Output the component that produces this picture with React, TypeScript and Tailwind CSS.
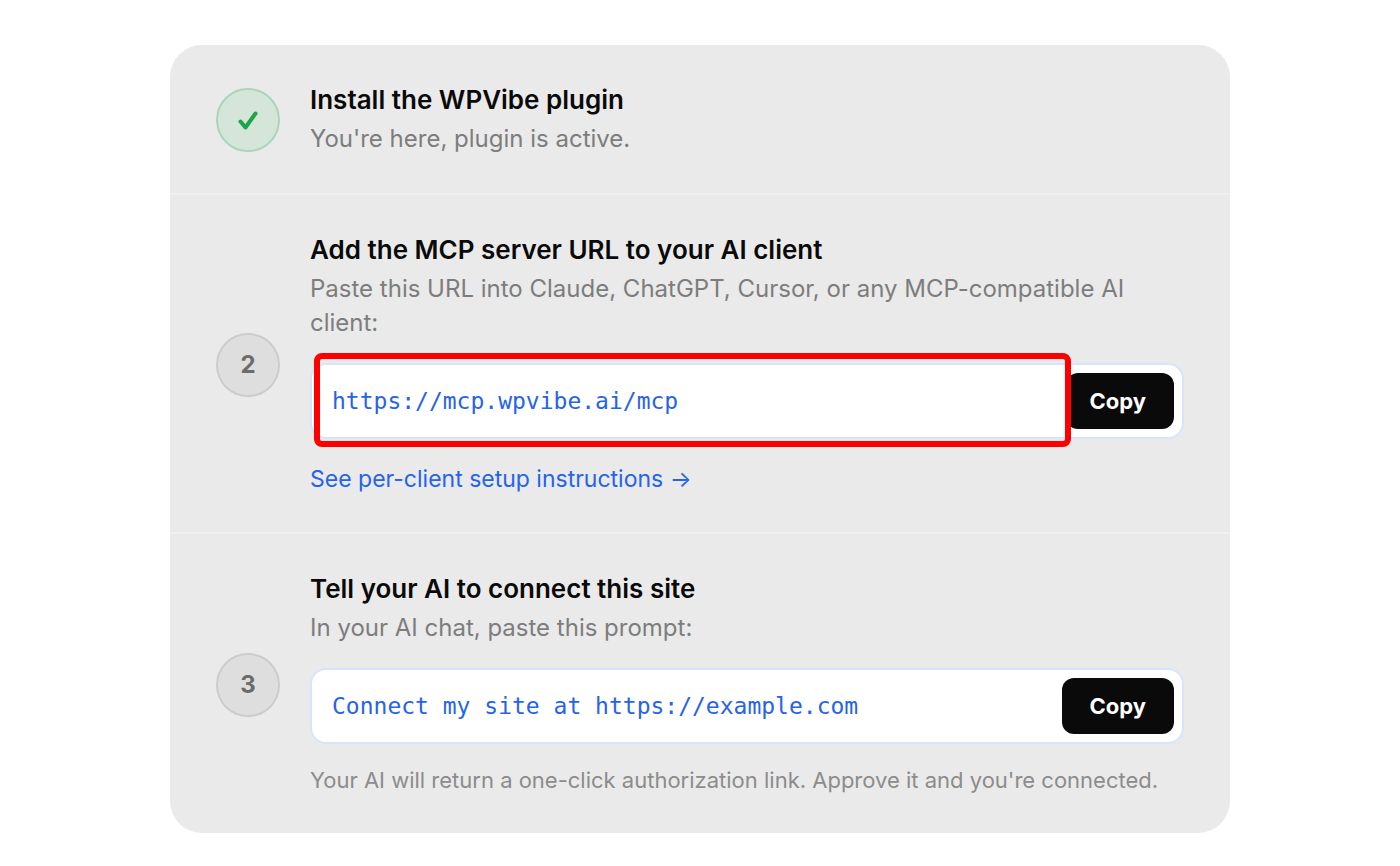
import React from 'react';

interface StepProps {
  badge: React.ReactNode;
  done?: boolean;
  title: string;
  description: string;
  children?: React.ReactNode;
}

const Step: React.FC<StepProps> = ({ badge, done, title, description, children }) => (
  <li className="flex items-center gap-[30px] px-[46px] pt-[39px] pb-[37px] border-b-2 border-[#f0f0f0] last:border-b-0">
    <div
      className={`flex size-16 shrink-0 items-center justify-center rounded-full border-2 text-2xl font-bold ${
        done ? 'border-[#a9d6ba] bg-[#d5e5da] text-[#1ba64c]' : 'border-[#cccccc] bg-[#dedede] text-[#6b6b6b]'
      }`}
    >
      {badge}
    </div>
    <div className="min-w-0 flex-1">
      <h2 className="text-[26px] leading-8 font-semibold text-[#0a0a0a]">{title}</h2>
      <p className="mt-1.5 text-[24px] leading-[34px] text-[#7d7d7d]">{description}</p>
      {children}
    </div>
  </li>
);

interface CopyFieldProps {
  label: string;
  value: string;
  highlighted?: boolean;
}

const CopyField: React.FC<CopyFieldProps> = ({ label, value, highlighted }) => (
  <div className="relative mt-[23px] flex items-center rounded-2xl border-2 border-[#d8e3fd] bg-white p-2">
    <input
      aria-label={label}
      readOnly
      value={value}
      className="min-w-0 flex-1 bg-transparent px-3 font-['DejaVu_Sans_Mono',monospace] text-[23px] text-[#2563eb] outline-none"
    />
    <button
      type="button"
      onClick={() => navigator.clipboard.writeText(value)}
      className={`rounded-xl bg-[#0a0a0a] py-3 pr-7 text-[22px] leading-8 font-bold text-white ${
        highlighted ? 'pl-6' : 'pl-7'
      }`}
    >
      Copy
    </button>
    {highlighted && (
      <div className="pointer-events-none absolute -top-3 -bottom-2.5 left-0.5 right-[111px] rounded-lg border-[6px] border-[#ff0000]" />
    )}
  </div>
);

export default function App() {
  return (
    <main className="bg-white px-[170px] py-[45px] font-['Inter',sans-serif]">
      <ol className="overflow-hidden rounded-[32px] bg-[#eaeaea]">
        <Step
          done
          badge={
            <svg width="20" height="20" viewBox="0 0 20 20" fill="none" aria-hidden="true">
              <path
                d="M2.5 11.5L7.5 17.5L17.5 3.5"
                stroke="currentColor"
                strokeWidth="4"
                strokeLinecap="round"
                strokeLinejoin="round"
              />
            </svg>
          }
          title="Install the WPVibe plugin"
          description="You're here, plugin is active."
        />
        <Step
          badge="2"
          title="Add the MCP server URL to your AI client"
          description="Paste this URL into Claude, ChatGPT, Cursor, or any MCP-compatible AI client:"
        >
          <CopyField label="MCP server URL" value="https://mcp.wpvibe.ai/mcp" highlighted />
          <div className="mt-6 flex">
            <a href="#setup" className="text-[23px] leading-8 text-[#2563eb]">
              See per-client setup instructions →
            </a>
          </div>
        </Step>
        <Step badge="3" title="Tell your AI to connect this site" description="In your AI chat, paste this prompt:">
          <CopyField label="Connection prompt" value="Connect my site at https://example.com" />
          <p className="mt-5 text-[22px] leading-8 text-[#8c8c8c]">
            Your AI will return a one-click authorization link. Approve it and you're connected.
          </p>
        </Step>
      </ol>
    </main>
  );
}
